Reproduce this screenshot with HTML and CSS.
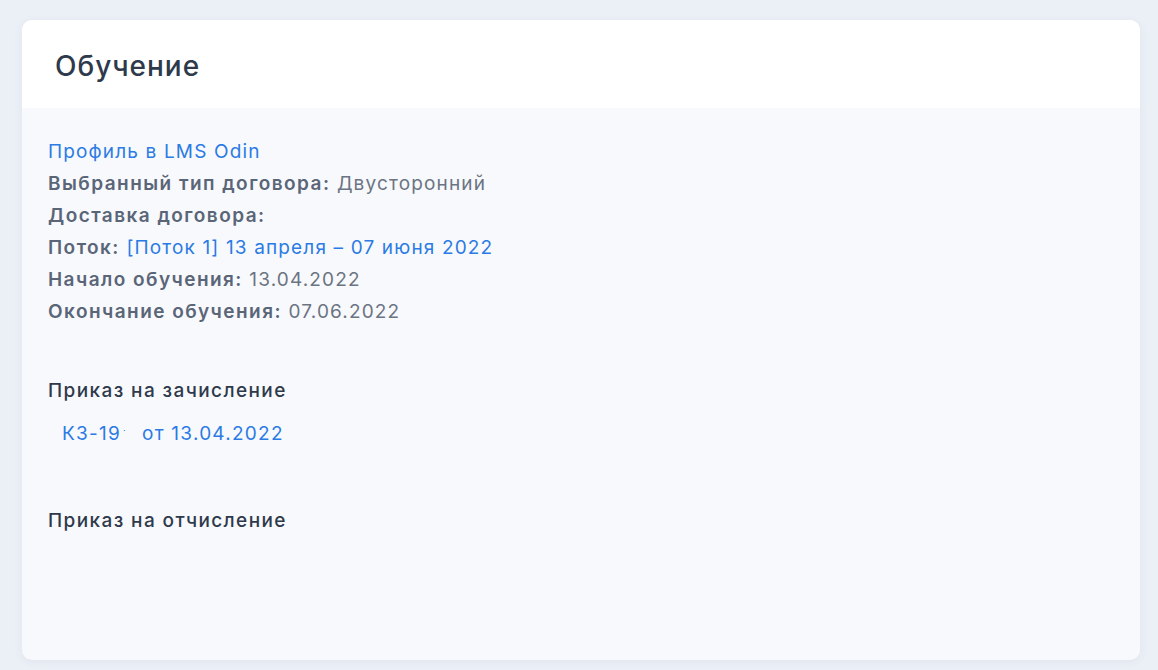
FILE: index.html
```html
<!DOCTYPE html>
<html lang="ru">
<head>
<meta charset="utf-8">
<title>Обучение</title>
<link rel="stylesheet" href="styles.css">
</head>
<body>
<div class="page">
  <section class="card">
    <header class="card-header">
      <h1 class="card-title">Обучение</h1>
    </header>
    <div class="card-body">
      <div class="info">
        <div class="row"><a class="link" href="#">Профиль в LMS Odin</a></div>
        <div class="row"><span class="label">Выбранный тип договора:</span> <span class="value">Двусторонний</span></div>
        <div class="row"><span class="label">Доставка договора:</span></div>
        <div class="row"><span class="label">Поток:</span> <a class="link" href="#">[Поток 1] 13 апреля – 07 июня 2022</a></div>
        <div class="row"><span class="label">Начало обучения:</span> <span class="value">13.04.2022</span></div>
        <div class="row"><span class="label">Окончание обучения:</span> <span class="value">07.06.2022</span></div>
      </div>
      <div class="order">
        <div class="order-title">Приказ на зачисление</div>
        <div class="order-item"><a class="link" href="#">КЗ-19<span class="mark">·</span></a><a class="link" href="#">от 13.04.2022</a></div>
      </div>
      <div class="order order-last">
        <div class="order-title">Приказ на отчисление</div>
      </div>
    </div>
  </section>
</div>
</body>
</html>
```
FILE: styles.css
```css
html, body {
  margin: 0;
  padding: 0;
  background: #ebeff6;
  font-family: Inter, "Noto Sans", "Liberation Sans", sans-serif;
}
.page {
  padding: 20px 18px 10px 22px;
}
.card {
  background: #f8f9fd;
  border-radius: 10px;
  box-shadow: 0 2px 10px rgba(60, 80, 120, 0.06);
  overflow: hidden;
  height: 640px;
  display: flex;
  flex-direction: column;
}
.card-header {
  background: #ffffff;
  height: 88px;
  display: flex;
  align-items: center;
  padding: 0 33px;
  flex-shrink: 0;
}
.card-title {
  margin: 0;
  font-size: 28px;
  font-weight: 500;
  color: #2e3a4b;
  letter-spacing: 1px;
  padding-top: 3px;
}
.card-body {
  padding: 28px 26px;
}
.info .row {
  font-size: 19px;
  line-height: 32px;
  height: 32px;
  letter-spacing: 1.15px;
  white-space: nowrap;
}
.label {
  font-weight: 600;
  color: #5a6678;
  letter-spacing: 1.45px;
}
.value {
  color: #6b7482;
}
.link {
  color: #2b7be4;
  text-decoration: none;
}
.order {
  margin-top: 47px;
}
.order-title {
  font-size: 19px;
  line-height: 32px;
  font-weight: 500;
  color: #2e3a4b;
  letter-spacing: 1.4px;
}
.order-item {
  font-size: 19px;
  line-height: 32px;
  margin-top: 8px;
  padding-left: 14px;
  letter-spacing: 1.25px;
}
.mark {
  display: inline-block;
  font-size: 9px;
  vertical-align: 6px;
  margin-left: 2px;
  width: 19px;
}
.order-last {
  margin-top: 55px;
}
```
